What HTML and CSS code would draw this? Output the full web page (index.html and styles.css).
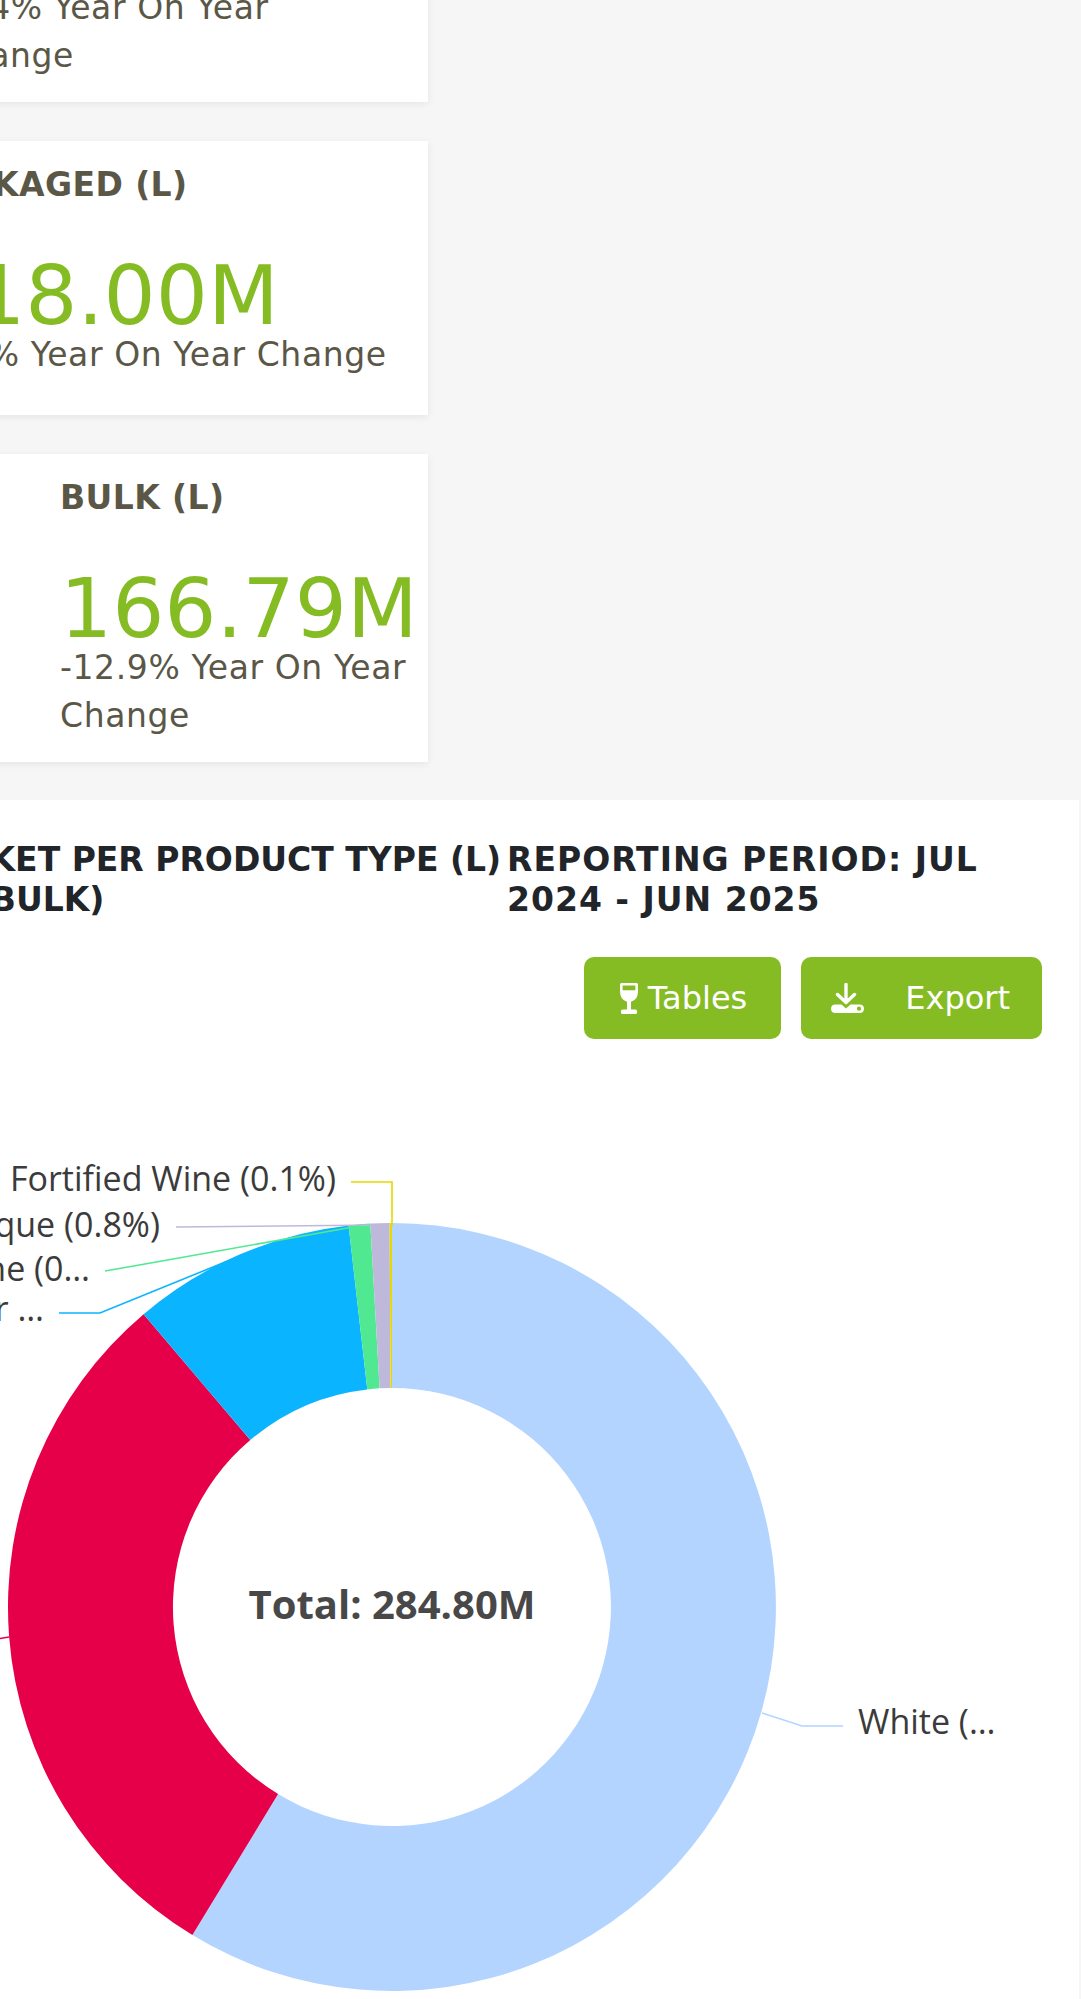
FILE: index.html
```html
<!DOCTYPE html>
<html lang="en">
<head>
<meta charset="utf-8">
<title>Market per product type</title>
<link rel="stylesheet" href="styles.css">
</head>
<body>
  <section class="kpis">
    <article class="kpi kpi--total">
      <h3 class="kpi-title">TOTAL (L)</h3>
      <div class="kpi-value">284.80M</div>
      <p class="kpi-sub">-0.4% Year On Year Change</p>
    </article>
    <article class="kpi kpi--packaged">
      <h3 class="kpi-title">PACKAGED (L)</h3>
      <div class="kpi-value">118.00M</div>
      <p class="kpi-sub">-2.2% Year On Year Change</p>
    </article>
    <article class="kpi kpi--bulk">
      <h3 class="kpi-title">BULK (L)</h3>
      <div class="kpi-value">166.79M</div>
      <p class="kpi-sub">-12.9% Year On Year Change</p>
    </article>
  </section>

  <section class="chart-panel">
    <div class="chart-head">
      <h2 class="chart-title">OVERALL MARKET PER PRODUCT TYPE (L) (PACKAGED + BULK)</h2>
      <h2 class="chart-period">REPORTING PERIOD: JUL 2024 - JUN 2025</h2>
    </div>
    <div class="chart-tools">
      <button class="btn btn--tables" type="button">
        <svg class="icon-glass" width="18" height="31" viewBox="0 0 18 31" aria-hidden="true">
          <path fill="#fff" fill-rule="evenodd" d="M1.5 0H16.5Q18 0 18 1.5V8Q18 17 11 18.8V26.5H15.5Q17 26.5 17 28V29.5Q17 31 15.5 31H2.5Q1 31 1 29.5V28Q1 26.5 2.5 26.5H7V18.8Q0 17 0 8V1.5Q0 0 1.5 0ZM2.6 2.6H15.4V7.2H2.6Z"/>
        </svg>
        <span>Tables</span>
      </button>
      <button class="btn btn--export" type="button">
        <svg class="icon-download" width="33" height="30" viewBox="0 0 33 30" aria-hidden="true">
          <path d="M15 1.5V18.5M6.5 11.5L15 19.5L23.5 11.5" fill="none" stroke="#fff" stroke-width="3.4" stroke-linecap="round" stroke-linejoin="round"/>
          <path fill="#fff" fill-rule="evenodd" d="M4.5 21.5H10.5L15 25.5L19.5 21.5H28.5Q33 21.5 33 25.75Q33 30 28.5 30H4.5Q0 30 0 25.75Q0 21.5 4.5 21.5ZM28 23.6A2.1 2.1 0 1 0 28 27.8A2.1 2.1 0 1 0 28 23.6Z"/>
        </svg>
        <span>Export</span>
      </button>
    </div>
    <svg class="donut" width="1335" height="960" viewBox="-293 1039 1335 960" aria-label="Donut chart of market per product type">
      <g class="slices">
        <path fill="#b3d4ff" d="M392 1223A384 384 0 1 1 192.4 1935.1L278.1 1794.1A219 219 0 1 0 392 1388Z"/>
        <path fill="#e60049" d="M192.4 1935.1A384 384 0 0 1 143.6 1314.2L250.3 1440A219 219 0 0 0 278.1 1794.1Z"/>
        <path fill="#0bb4ff" d="M143.6 1314.2A384 384 0 0 1 348.6 1225.5L367.3 1389.4A219 219 0 0 0 250.3 1440Z"/>
        <path fill="#50e991" d="M348.6 1225.5A384 384 0 0 1 370.3 1223.6L379.6 1388.35A219 219 0 0 0 367.3 1389.4Z"/>
        <path fill="#beb9db" d="M370.3 1223.6A384 384 0 0 1 389.6 1223L390.6 1388A219 219 0 0 0 379.6 1388.35Z"/>
        <path fill="#e6d800" d="M389.6 1223A384 384 0 0 1 392 1223L392 1388A219 219 0 0 0 390.6 1388Z"/>
      </g>
      <g class="leaders" fill="none" stroke-width="1.6">
        <polyline stroke="#e6d800" points="351,1182 392,1182 392,1226"/>
        <polyline stroke="#beb9db" points="176,1227 381,1225"/>
        <polyline stroke="#50e991" points="105,1271 145,1264 359,1226"/>
        <polyline stroke="#0bb4ff" points="59,1313 100,1313 240,1256"/>
        <polyline stroke="#e60049" points="-60,1642 -20,1642 9,1637"/>
        <polyline stroke="#b3d4ff" points="762,1713 802,1726 843,1726"/>
      </g>
      <g class="labels">
        <text x="336" y="1191" text-anchor="end">Fortified Wine (0.1%)</text>
        <text x="160" y="1237" text-anchor="end">Cap Classique (0.8%)</text>
        <text x="90" y="1281" text-anchor="end">Sparkling Wine (0…</text>
        <text x="44" y="1321" text-anchor="end">Blanc de Noir …</text>
        <text x="-72" y="1651" text-anchor="end">Red (30.1%)</text>
        <text x="858" y="1734">White (…</text>
      </g>
      <text class="donut-total" x="392" y="1619" text-anchor="middle">Total: 284.80M</text>
    </svg>
  </section>
</body>
</html>
```

FILE: styles.css
```css
html, body {
  margin: 0;
  padding: 0;
}

body {
  display: flow-root;
  width: 1081px;
  height: 1999px;
  overflow: hidden;
  background: #f6f6f6;
  font-family: "DejaVu Sans", Verdana, sans-serif;
}

/* KPI cards */
.kpis {
  display: flex;
  flex-direction: column;
  gap: 39px;
  width: 568px;
  margin-top: -206px;
  margin-left: -140px;
}

.kpi {
  background: #fff;
  box-shadow: 0 2px 7px rgba(0, 0, 0, 0.07);
  padding: 24px 22px 22px 88px;
  color: #5b5747;
}

.kpi--total {
  padding-left: 84px;
  padding-right: 40px;
}

.kpi--packaged {
  padding-left: 61px;
  padding-right: 24px;
  padding-bottom: 36px;
}

.kpi--bulk {
  padding-left: 200px;
  padding-right: 12px;
}

.kpi-title {
  margin: 0;
  font-size: 33px;
  line-height: 40px;
  font-weight: 700;
  letter-spacing: 0.4px;
  color: #5b5747;
}

.kpi-value {
  margin-top: 56px;
  font-size: 82px;
  line-height: 70px;
  color: #85bc24;
  white-space: nowrap;
}

.kpi-sub {
  margin: 0;
  font-size: 33px;
  line-height: 48px;
  letter-spacing: 0.6px;
  color: #5b5747;
}

/* Chart panel */
.chart-panel {
  box-sizing: border-box;
  width: 1372px;
  margin-top: 38px;
  margin-left: -293px;
  padding: 40px 37px 0 0;
  background: #fff;
}

.chart-head {
  display: flex;
  align-items: flex-start;
}

.chart-title,
.chart-period {
  margin: 0;
  font-size: 33px;
  line-height: 39.6px;
  font-weight: 700;
  color: #212529;
}

.chart-title {
  flex: 0 0 779px;
  margin-left: 19px;
}

.chart-period {
  flex: 0 0 500px;
  margin-left: 2px;
  letter-spacing: 1px;
}

.chart-tools {
  display: flex;
  justify-content: flex-end;
  gap: 20px;
  margin-top: 38px;
}

.btn {
  display: inline-flex;
  align-items: center;
  height: 82px;
  border: none;
  border-radius: 10px;
  background: #85bc24;
  color: #fff;
  font-family: "DejaVu Sans", Verdana, sans-serif;
  font-size: 32px;
  line-height: 1;
  cursor: pointer;
}

.btn svg {
  display: block;
  flex: none;
}

.btn--tables {
  gap: 10px;
  padding: 0 34px 0 36px;
}

.btn--export {
  gap: 41px;
  padding: 0 32px 0 30px;
}

.donut {
  display: block;
}

.labels text {
  font-family: "Open Sans", "Noto Sans", sans-serif;
  font-size: 34px;
  fill: #3b3b3b;
}

.donut-total {
  font-family: "Open Sans", "Noto Sans", sans-serif;
  font-size: 40px;
  font-weight: 700;
  fill: #484848;
}
```
